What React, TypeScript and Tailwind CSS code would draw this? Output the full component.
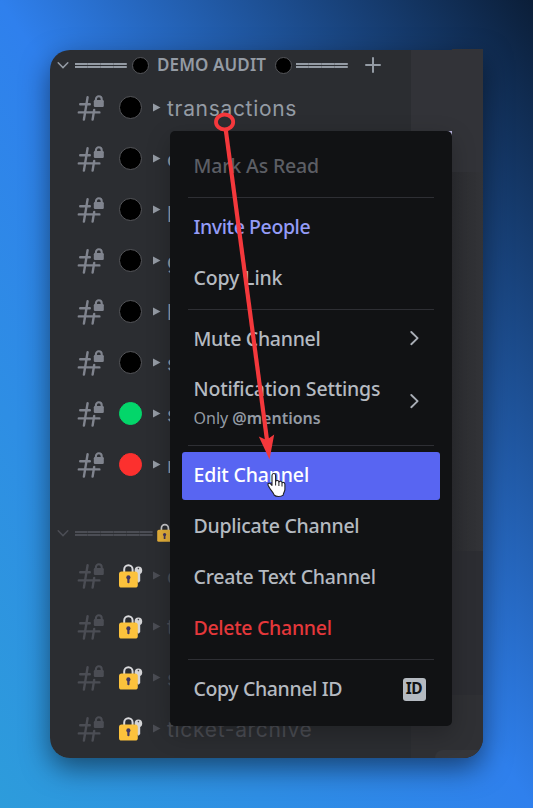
import type { ReactNode } from 'react'

const sans = "font-['Noto_Sans','Open_Sans',sans-serif]"

function Chevron() {
  return (
    <svg className="ml-[7px] shrink-0" width="12" height="12" viewBox="0 0 12 12" fill="none" stroke="currentColor" strokeWidth="1.5" strokeLinecap="round">
      <path d="M1.2 3.8 6 8.6l4.8-4.8" />
    </svg>
  )
}

function HashLock() {
  return (
    <svg className="mb-[3px] ml-[27px] shrink-0" width="28" height="28" viewBox="0 0 28 28">
      <g fill="none" stroke="currentColor" strokeWidth="2.4" strokeLinecap="round">
        <path d="M3.2 11.2h9.6M1.8 19.4h20.6M10.6 4.3 6.9 26.6M17.2 16.9 15.6 26.6" />
      </g>
      <path d="M18.9 8.4V6.2a2.9 2.9 0 0 1 5.8 0v2.2" fill="none" stroke="currentColor" strokeWidth="2.1" />
      <rect x="16.8" y="7" width="10" height="7" rx="1.2" fill="currentColor" />
    </svg>
  )
}

function LockKey() {
  return (
    <svg className="shrink-0" width="26" height="26" viewBox="0 0 26 26">
      <path d="M6.2 10V6.4a4.2 4.2 0 0 1 8.4 0V10" fill="none" stroke="#d9d9dc" strokeWidth="2" />
      <circle cx="20.4" cy="7.4" r="3.8" fill="#d3d3d5" />
      <path d="M18.8 9h3.4v9l-1.7 1.8-1.7-1.8z" fill="#d3d3d5" />
      <circle cx="20.4" cy="5.6" r=".8" fill="#44454b" />
      <rect x="1" y="8.5" width="18.8" height="16" rx="2.6" fill="#fcc23c" />
      <circle cx="10.4" cy="14.4" r="2.1" fill="#43375f" />
      <rect x="9.3" y="14.8" width="2.2" height="5.4" rx="1" fill="#43375f" />
    </svg>
  )
}

function Bars({ count }: { count: number }) {
  return (
    <div className="mt-px flex shrink-0">
      {Array.from({ length: count }, (_, i) => (
        <div key={i} className="flex h-[5px] w-[13px] flex-col justify-between">
          <div className="flex h-[2px] bg-current"><div className="ml-auto w-px bg-black/15" /></div>
          <div className="flex h-[2px] bg-current"><div className="ml-auto w-px bg-black/15" /></div>
        </div>
      ))}
    </div>
  )
}

type Row = { name: string; dot?: string; locked?: boolean }

const channels: Row[] = [
  { name: 'transactions', dot: 'bg-black border-[#55565a]' },
  { name: 'c', dot: 'bg-black border-[#55565a]' },
  { name: 'p', dot: 'bg-black border-[#55565a]' },
  { name: 'g', dot: 'bg-black border-[#55565a]' },
  { name: 'l', dot: 'bg-black border-[#55565a]' },
  { name: 's', dot: 'bg-black border-[#55565a]' },
  { name: 's', dot: 'bg-[#03d66a] border-[#03d66a]' },
  { name: 'r', dot: 'bg-[#fc302e] border-[#fc302e]' },
]

const lockedChannels: Row[] = [
  { name: 'o', locked: true },
  { name: 't', locked: true },
  { name: 's', locked: true },
  { name: 'ticket-archive', locked: true },
]

function ChannelRow({ name, dot, locked }: Row) {
  return (
    <div className={`flex h-[51px] items-center ${locked ? 'text-[#4b4d54]' : 'text-[#80848e]'}`}>
      <HashLock />
      <div className="mb-[2px] ml-3 flex w-[27px] items-center justify-center">
        {locked ? <LockKey /> : <div className={`size-[23px] rounded-full border ${dot}`} />}
      </div>
      <svg className={`mb-[2px] ml-[9px] shrink-0 ${locked ? '' : 'text-[#949ba4]'}`} width="8" height="9" viewBox="0 0 8 9">
        <path d="M0 .5v8l7.5-4z" fill="currentColor" />
      </svg>
      <span className={`ml-[6px] font-['Inter',sans-serif] text-[21px] leading-6 tracking-[0.68px] ${locked ? '' : 'text-[#949ba4]'}`}>{name}</span>
    </div>
  )
}

function Item({ children, className = 'text-[#b5bac1] tracking-[-0.3px]', end }: { children: ReactNode; className?: string; end?: ReactNode }) {
  return (
    <div className={`flex h-12 items-center justify-between rounded-[3px] px-[11.5px] text-[19.5px] leading-6 font-medium whitespace-nowrap ${className}`}>
      <span className="mb-px">{children}</span>
      {end}
    </div>
  )
}

function Separator({ line = 'mt-px' }: { line?: string }) {
  return (
    <div className="flex h-[13px] items-center px-[6px]">
      <div className={`h-px w-full bg-[#2e2f34] ${line}`} />
    </div>
  )
}

function Arrow() {
  return (
    <svg className="mr-[9px] mb-[3px] shrink-0 text-[#a9aeb6]" width="10" height="16" viewBox="0 0 10 16" fill="none" stroke="currentColor" strokeWidth="1.9" strokeLinecap="round" strokeLinejoin="round">
      <path d="M1.3 2 7.6 8.1l-6.3 6.1" />
    </svg>
  )
}

function ContextMenu() {
  return (
    <div className="absolute top-[81px] left-[120px] flex h-[595px] w-[282px] flex-col rounded-[5px] bg-[#111214] px-3 pt-[11px] shadow-[0_8px_24px_rgba(0,0,0,0.24)]">
      <Item className="tracking-[-0.15px] text-[#5c5e64]">Mark As Read</Item>
      <Separator />
      <div className="flex flex-col gap-[3px]">
        <Item className="tracking-[-0.4px] text-[#949cf7]">Invite People</Item>
        <Item className="tracking-[-0.15px] text-[#b5bac1]">Copy Link</Item>
      </div>
      <Separator />
      <div className="flex flex-col gap-[3px]">
        <Item end={<Arrow />}>Mute Channel</Item>
        <div className="flex h-[73px] items-center justify-between px-[11.5px]">
          <div className="whitespace-nowrap">
            <div className="text-[19.5px] leading-6 font-medium tracking-[-0.18px] text-[#b5bac1]">Notification Settings</div>
            <div className="mt-[7px] text-base leading-5 text-[#949ba4]">
              Only <span className="font-semibold">@mentions</span>
            </div>
          </div>
          <Arrow />
        </div>
      </div>
      <Separator line="mb-px" />
      <div className="flex flex-col gap-[3px] [&_span]:mb-[3px]">
        <Item className="bg-[#5865f2] tracking-[-0.16px] text-white">Edit Channel</Item>
        <Item className="tracking-[-0.26px] text-[#b5bac1]">Duplicate Channel</Item>
        <Item className="tracking-[-0.22px] text-[#b5bac1]">Create Text Channel</Item>
        <Item className="tracking-[-0.3px] text-[#e5383b]">Delete Channel</Item>
      </div>
      <Separator line="mb-px" />
      <div className="[&_span]:mb-[2px]">
        <Item
          className="tracking-[-0.38px] text-[#b5bac1]"
          end={
            <span className="mr-[3px] flex size-[23px] items-center justify-center rounded-[3px] bg-[#b5bac1] text-[15.5px] leading-none font-bold text-[#111214]">ID</span>
          }
        >
          Copy Channel ID
        </Item>
      </div>
    </div>
  )
}

function Pointer() {
  return (
    <svg className="absolute top-0 left-0" width="433" height="708" viewBox="50 50 433 708">
      <ellipse cx="224.6" cy="122" rx="8.6" ry="7.5" fill="none" stroke="#f4383c" strokeWidth="3.8" />
      <path d="M225.8 130 267 440" stroke="#f4383c" strokeWidth="4.2" />
      <path d="M269.5 459.5 258.8 436.5 266.5 440 274.2 434.5z" fill="#f4383c" />
      <path
        d="M272 475.5c0-2.6 3.6-2.6 3.6 0v5.8c.6-1.3 3.1-1.1 3.3.6.7-1.1 2.9-.8 3.1.9.9-.9 2.9-.3 2.9 1.5v5.2c0 2-1.7 3.4-1.7 5.6-2.2 1.8-7.2 1.8-9.1-.1-.5-2.3-3.2-4.6-4.8-7.5-1.3-1.8-2.2-3-1-4 1.1-.9 2.6.2 3.7 1.9z"
        fill="#fff"
        stroke="#202124"
        strokeWidth="1.1"
        strokeLinejoin="round"
      />
      <path d="M275.6 481v4.5M278.9 482v4M282 483v3.5" stroke="#202124" strokeWidth="1" />
    </svg>
  )
}

export default function App() {
  return (
    <div className={`h-[808px] w-[533px] overflow-hidden bg-[linear-gradient(to_top_right,#2d9cdb,#2f80ed_50%,#0b1e38)] px-[50px] pt-[50px] ${sans}`}>
      <div className="relative h-[708px] w-[433px] rounded-[20px] rounded-tr-none shadow-[0_10px_28px_rgba(0,0,0,0.5)]">
        <div className="absolute -top-px right-0 h-px w-[31px] bg-[#323338]" />
        <div className="flex h-full overflow-hidden rounded-[20px] rounded-tr-none bg-[#2b2d31]">
          <div className="flex w-[361px] shrink-0 flex-col">
            <div className="flex h-[30px] items-center text-[#949ba4]">
              <Chevron />
              <div className="ml-[6px]"><Bars count={4} /></div>
              <div className="ml-[5px] size-[17px] shrink-0 rounded-full border border-[#55565a] bg-black" />
              <span className="ml-[8px] w-[110px] text-[17px] leading-5 font-semibold tracking-[0.1px] whitespace-nowrap">DEMO AUDIT</span>
              <div className="ml-[8px] size-[17px] shrink-0 rounded-full border border-[#55565a] bg-black" />
              <div className="ml-1"><Bars count={4} /></div>
              <svg className="ml-[17px] shrink-0" width="16" height="16" viewBox="0 0 16 16" stroke="currentColor" strokeWidth="2" strokeLinecap="round">
                <path d="M8 1v14M1 8h14" />
              </svg>
            </div>
            <div className="pt-[3px]">
              {channels.map((c, i) => <ChannelRow key={i} {...c} />)}
            </div>
            <div className="mt-[27px] flex h-[30px] items-center text-[#4b4d54]">
              <Chevron />
              <div className="ml-[6px]"><Bars count={6} /></div>
              <svg className="mb-px ml-[4px]" width="16" height="20" viewBox="0 0 16 20">
                <path d="M4.4 8V5.2a3.5 3.5 0 0 1 7 0V8" fill="none" stroke="#c9c9cc" strokeWidth="1.7" />
                <rect x=".2" y="6.8" width="15" height="12" rx="1.6" fill="#e5b03a" />
                <circle cx="7.6" cy="11.5" r="1.6" fill="#43375f" />
                <path d="M7.6 12v4" stroke="#43375f" strokeWidth="1.7" />
              </svg>
            </div>
            <div className="pt-[3px]">
              {lockedChannels.map((c, i) => <ChannelRow key={i} {...c} />)}
            </div>
          </div>
          <div className="flex flex-1 flex-col">
            <div className="h-[122px] bg-[#323338]" />
            <div className="h-[379px] bg-[linear-gradient(to_right,#2c2d31_55%,#323337)]" />
            <div className="h-36 bg-[#2c2d32]" />
            <div className="flex flex-1 flex-col justify-end bg-[#2f3034]">
              <div className="ml-6 h-2 rounded-tl-lg bg-[#35363a]" />
            </div>
          </div>
        </div>
        <div className="absolute top-[81px] left-[397px] size-[5px] bg-[#b9b4dc]" />
        <ContextMenu />
        <Pointer />
      </div>
    </div>
  )
}
